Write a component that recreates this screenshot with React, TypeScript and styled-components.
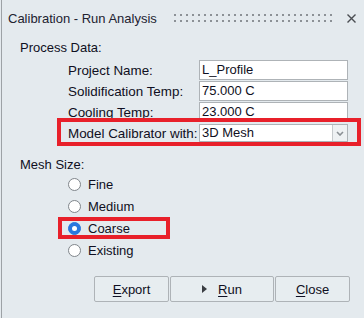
import React from 'react';
import styled, { createGlobalStyle } from 'styled-components';

const Global = createGlobalStyle`
  html, body { margin: 0; padding: 0; background: #e4eaee; }
  body {
    font-family: "Liberation Sans", Arial, sans-serif;
    font-size: 13px;
    color: #0f0f22;
  }
`;

const Panel = styled.div`
  margin-left: 1px;
  border-left: 1px solid #9da2a6;
  height: 318px;
  box-sizing: border-box;
  display: flex;
  flex-direction: column;
`;

const TitleBar = styled.div`
  height: 36px;
  display: flex;
  align-items: center;
  padding: 0 8px 0 6px;
`;

const Title = styled.span`
  color: #222230;
  white-space: nowrap;
`;

const Grip = styled.svg`
  flex: 1;
  height: 8px;
  margin: 0 12px 0 17px;
`;

const CloseX = styled.svg`
  width: 9px;
  height: 9px;
`;

const SectionLabel = styled.div<{ $top: number }>`
  padding-left: 18px;
  line-height: 16px;
  margin-top: ${(p) => p.$top}px;
`;

const Form = styled.div`
  display: flex;
  flex-direction: column;
  gap: 1px;
  margin: 4px 0 0 66px;
`;

const Row = styled.div`
  position: relative;
  display: flex;
  align-items: center;
  height: 20px;
  width: 280px;
`;

const Label = styled.span`
  width: 131px;
  white-space: nowrap;
  font-size: 13.4px;
`;

const Field = styled.div`
  width: 149px;
  height: 20px;
  box-sizing: border-box;
  border: 1px solid #aeb3b7;
  background: #fff;
  padding: 0 2px;
  line-height: 18px;
`;

const Select = styled.div`
  width: 149px;
  height: 18px;
  box-sizing: border-box;
  border: 1px solid #aeb3b7;
  background: #fff;
  display: flex;
`;

const SelectText = styled.span`
  flex: 1;
  padding-left: 2px;
  line-height: 16px;
`;

const DropButton = styled.div`
  width: 14px;
  border-left: 1px solid #c6cacd;
  background: #eef1f3;
  display: flex;
  align-items: center;
  justify-content: center;
`;

const Highlight = styled.div<{ $t: number; $b: number; $l: number; $w?: number; $r?: number }>`
  position: absolute;
  pointer-events: none;
  border: 4px solid #e8202a;
  top: ${(p) => p.$t}px;
  bottom: ${(p) => p.$b}px;
  left: ${(p) => p.$l}px;
  ${(p) => (p.$w !== undefined ? `width: ${p.$w}px; box-sizing: border-box;` : `right: ${p.$r}px;`)}
`;

const RadioList = styled.div`
  display: flex;
  flex-direction: column;
  margin-left: 66px;
`;

const RadioRow = styled.div`
  position: relative;
  height: 22px;
  display: flex;
  align-items: center;
  gap: 7px;
`;

const RadioDot = styled.span<{ $on?: boolean }>`
  position: relative;
  width: 13px;
  height: 13px;
  border-radius: 50%;
  box-sizing: border-box;
  border: 1px solid ${(p) => (p.$on ? '#2a78de' : '#80868b')};
  background: ${(p) => (p.$on ? '#2a78de' : '#fff')};
  &::after {
    content: '';
    display: ${(p) => (p.$on ? 'block' : 'none')};
    position: absolute;
    left: 50%;
    top: 50%;
    width: 5px;
    height: 5px;
    margin: -2.5px 0 0 -2.5px;
    border-radius: 50%;
    background: #fff;
  }
`;

const ButtonRow = styled.div`
  display: flex;
  justify-content: flex-end;
  gap: 1px;
  margin-top: 15px;
  padding-right: 14px;
`;

const Button = styled.button<{ $w: number }>`
  width: ${(p) => p.$w}px;
  height: 26px;
  box-sizing: border-box;
  border: 1px solid #aeb3b7;
  border-radius: 2px;
  background: #e7edf0;
  font: inherit;
  color: inherit;
  padding: 0;
  display: flex;
  align-items: center;
  justify-content: center;
  gap: 11px;
`;

const Mnemonic = styled.u`
  text-decoration: underline;
  text-underline-offset: 2px;
  text-decoration-thickness: 1px;
`;

const fields = [
  { label: 'Project Name:', value: 'L_Profile' },
  { label: 'Solidification Temp:', value: '75.000 C' },
  { label: 'Cooling Temp:', value: '23.000 C' },
];

const meshes = ['Fine', 'Medium', 'Coarse', 'Existing'];

export default function App() {
  return (
    <>
      <Global />
      <Panel>
        <TitleBar>
          <Title>Calibration - Run Analysis</Title>
          <Grip>
            <defs>
              <pattern id="grip" width="6" height="6" patternUnits="userSpaceOnUse">
                <rect x="0" y="0" width="2" height="2" fill="#8c9196" />
              </pattern>
            </defs>
            <rect x="0" y="0" width="100%" height="8" fill="url(#grip)" />
          </Grip>
          <CloseX viewBox="0 0 9 9">
            <path d="M0.5 0.5 L8.5 8.5 M8.5 0.5 L0.5 8.5" stroke="#4a4d52" strokeWidth="1.4" />
          </CloseX>
        </TitleBar>

        <SectionLabel $top={4}>Process Data:</SectionLabel>
        <Form>
          {fields.map((f) => (
            <Row key={f.label}>
              <Label>{f.label}</Label>
              <Field>{f.value}</Field>
            </Row>
          ))}
          <Row>
            <Label>Model Calibrator with:</Label>
            <Select>
              <SelectText>3D Mesh</SelectText>
              <DropButton>
                <svg width="8" height="5" viewBox="0 0 8 5">
                  <path d="M1 1 L4 4 L7 1" stroke="#8a8f94" strokeWidth="1.6" fill="none" />
                </svg>
              </DropButton>
            </Select>
            <Highlight $t={-5} $b={-3} $l={-11} $r={-13} />
          </Row>
        </Form>

        <SectionLabel $top={14}>Mesh Size:</SectionLabel>
        <RadioList>
          {meshes.map((m) => (
            <RadioRow key={m}>
              <RadioDot $on={m === 'Coarse'} />
              <span>{m}</span>
              {m === 'Coarse' && <Highlight $t={0} $b={0} $l={-10} $w={112} />}
            </RadioRow>
          ))}
        </RadioList>

        <ButtonRow>
          <Button $w={75}>
            <span>
              <Mnemonic>E</Mnemonic>xport
            </span>
          </Button>
          <Button $w={104}>
            <svg width="5" height="8" viewBox="0 0 5 8">
              <path d="M0 0 L5 4 L0 8 Z" fill="#3a3d42" />
            </svg>
            <span>
              <Mnemonic>R</Mnemonic>un
            </span>
          </Button>
          <Button $w={75}>
            <span>
              <Mnemonic>C</Mnemonic>lose
            </span>
          </Button>
        </ButtonRow>
      </Panel>
    </>
  );
}
